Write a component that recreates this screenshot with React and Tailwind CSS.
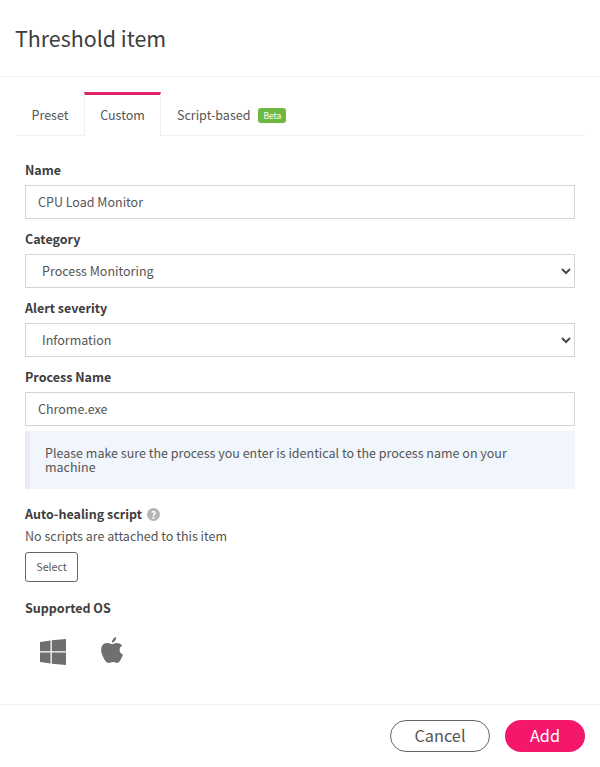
import { useState } from 'react';

const fontStack = { fontFamily: '"Noto Sans CJK SC", "Source Sans Pro", sans-serif' };

const Label = ({ children }) => (
  <label className="block h-[20px] text-[12.5px] leading-[20px] font-bold text-[#3d3d3d]">{children}</label>
);

const TextField = ({ label, value, onChange }) => (
  <div>
    <Label>{label}</Label>
    <input
      value={value}
      onChange={(e) => onChange(e.target.value)}
      className="block mt-[5px] w-full h-[34px] px-[12px] pb-[2px] border border-[#d2d4d8] bg-white text-[12.5px] text-[#555] outline-none"
    />
  </div>
);

const SelectField = ({ label, value, options, onChange }) => (
  <div>
    <Label>{label}</Label>
    <div className="relative mt-[5px]">
      <select
        value={value}
        onChange={(e) => onChange(e.target.value)}
        className="block w-full h-[34px] pl-[16px] pr-[28px] border border-[#d2d4d8] bg-white text-[12.5px] text-[#555] outline-none appearance-none rounded-none"
      >
        {options.map((o) => (
          <option key={o}>{o}</option>
        ))}
      </select>
      <svg className="absolute right-[4px] top-[13px] w-[10px] h-[8px] pointer-events-none" viewBox="0 0 10 8" fill="none">
        <path d="M1 2l4 4 4-4" stroke="#4a4a4a" strokeWidth="2" />
      </svg>
    </div>
  </div>
);

const WindowsIcon = () => (
  <svg className="w-[26px] h-[26px]" viewBox="0 0 26 26" fill="#6f6f6f">
    <path d="M0 3l10.500-1.500V12.200H0zM11.800 1.300L26 0v12.200H11.800zM0 13.500h10.500v11L0 23zM11.800 13.500H26V26l-14.200-1.300z" />
  </svg>
);

const AppleIcon = () => (
  <svg className="w-[22px] h-[26px]" viewBox="0 0 23 27" fill="#6f6f6f">
    <path d="M11.500 7.500c1.300 0 3-1.200 5.200-1.200 2.300 0 4.300 1.100 5.300 2.800-3.800 2.200-3.200 7.600.9 9.200-.9 2.800-3.300 8.700-5.800 8.700-1.500 0-2.500-1-4.500-1-2.100 0-3 1-4.500 1C5 27 1.100 20 .4 15.500-.6 10 2 6.300 6.700 6.300c2 0 3.600 1.200 4.800 1.200z" />
    <path d="M11.300 6C11.300 3.300 13.200.800 15.800 0c.3 2.800-1.800 5.500-4.500 6z" />
  </svg>
);

export default function App() {
  const [name, setName] = useState('CPU Load Monitor');
  const [category, setCategory] = useState('Process Monitoring');
  const [severity, setSeverity] = useState('Information');
  const [processName, setProcessName] = useState('Chrome.exe');

  return (
    <div style={fontStack} className="w-[600px] h-[767px] bg-white text-[#555] overflow-hidden flex flex-col">
      <div className="h-[77px] border-b border-[#f0f0f0] px-[15px] pt-[20px]">
        <h1 className="text-[21.4px] leading-[36px] text-[#3d3d3d]">Threshold item</h1>
      </div>

      <div className="flex-1 pt-[15px]">
        <div className="mx-[16px] mr-[15px] h-[44px] flex border-b border-[#f0f0f0] text-[12.5px] text-[#555]">
          <div className="w-[68px] h-[44px] pt-[3px] flex items-center justify-center">Preset</div>
          <div className="w-[77px] h-[44px] -mb-px flex items-center justify-center border-t-[3px] border-t-[#e0246c] border-x border-x-[#f0f0f0] bg-white">
            Custom
          </div>
          <div className="h-[44px] pl-[16px] pt-[3px] flex items-center gap-[8px]">
            Script-based
            <span className="w-[28px] h-[15px] rounded-[3px] bg-[#6fb83f] text-white text-[8.5px] leading-[15px] text-center">Beta</span>
          </div>
        </div>

        <div className="px-[25px] pt-[24px]">
          <div className="flex flex-col gap-[10px]">
            <TextField label="Name" value={name} onChange={setName} />
            <SelectField label="Category" value={category} options={['Process Monitoring', 'Performance']} onChange={setCategory} />
            <SelectField label="Alert severity" value={severity} options={['Information', 'Warning', 'Critical']} onChange={setSeverity} />
            <TextField label="Process Name" value={processName} onChange={setProcessName} />
          </div>

          <div className="mt-[5px] h-[58px] border-l-[5px] border-[#e9edf1] bg-[#f0f6fc] pl-[15px] pr-[40px] pt-[15px] text-[12.5px] leading-[14px] text-[#555]">
            Please make sure the process you enter is identical to the process name on your machine
          </div>

          <div className="mt-[15px] h-[20px] flex items-center gap-[5px] text-[12.5px] font-bold text-[#3d3d3d]">
            Auto-healing script
            <span className="w-[13px] h-[13px] rounded-full bg-[#b5b5b5] text-white text-[10px] leading-[13px] text-center">?</span>
          </div>
          <p className="mt-[2px] text-[12.5px] leading-[20px] text-[#555]">No scripts are attached to this item</p>
          <button className="block mt-[6px] w-[53px] h-[30px] rounded-[3px] border border-[#666] text-[10.6px] text-[#555]">Select</button>

          <div className="mt-[16px]">
            <Label>Supported OS</Label>
          </div>
          <div className="mt-[18px] ml-[15px] flex items-start gap-[35px]">
            <div className="pt-[3px]">
              <WindowsIcon />
            </div>
            <div className="pt-[1px]">
              <AppleIcon />
            </div>
          </div>
        </div>
      </div>

      <div className="h-[63px] border-t border-[#f0f0f0] pt-[15px] pr-[15px] flex justify-end gap-[15px]">
        <button className="w-[100px] h-[32px] pb-[2px] rounded-full border border-[#666] text-[16.3px] text-[#555]">Cancel</button>
        <button className="w-[80px] h-[32px] pb-[2px] rounded-full bg-[#f5176b] text-[16.3px] text-white">Add</button>
      </div>
    </div>
  );
}
